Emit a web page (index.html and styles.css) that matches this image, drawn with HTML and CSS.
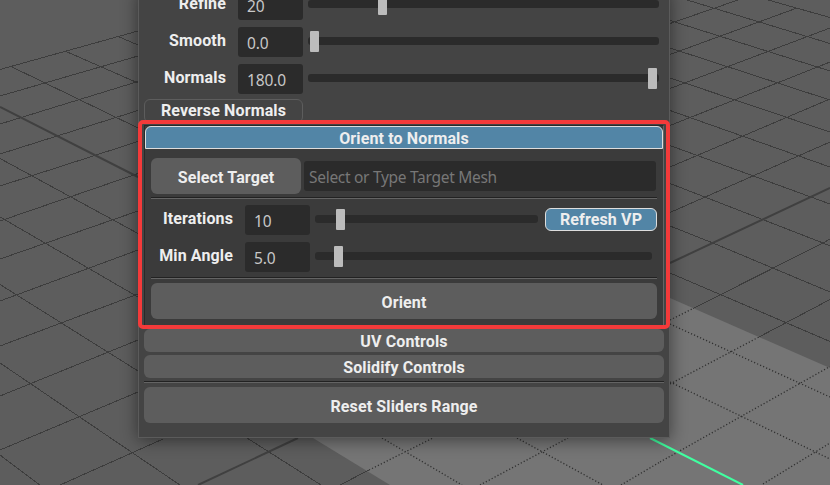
FILE: index.html
```
<!DOCTYPE html>
<html lang="en">
<head>
<meta charset="utf-8">
<title>Mesh Controls</title>
<link rel="stylesheet" href="styles.css">
</head>
<body>
<svg class="viewport" viewBox="0 0 830 485" aria-hidden="true">
  <path class="plane" d="M138 331L390 485H830V368L670 298L400 180Z"/>
  <g class="grid">
    <path d="M0 69.5L138 31M0 96L138 56M0 124L138 81.5M0 154L138 110.5M0 186L138 141.5M0 221L138 173.5M0 259L138 211M0 301L138 250M0 346L138 294M0 396L138 340M0 450L138 392M60 485L163 439"/>
    <path d="M117 36L138 45M65 51L138 83M10 66L138 128M0 158.5L138 233.5M0 217L45 243L138 297M0 284.5L138 371M0 363L180 485M0 455L40 485M247 438L321 485M340 485L369 470"/>
    <path d="M687 0L830 43.5M768 0L830 17.5M670 20.5L830 71M670 48L830 100M670 78L830 132M670 110.5L830 167M670 145.5L830 204M670 183.5L823 243L830 246M670 226L713 243L830 292M670 273L830 341.5"/>
    <path d="M670 23.5L738 0M670 54.5L797 8M670 88.5L830 28M670 125.5L830 62M670 167L830 99M670 212.5L830 142M693 308.500L823 243L830 239M758 337.500L830 299.500"/>
  </g>
  <path class="dots" d="M670 320L693 308.500M670 384L758 337.500M660 462L830 366.500M621 485L660 462M763 484L830 443M670 324L830 397M670 382L830 459M369 470L433 438M382 438L462 485M480 485L568 438M517 438L603 485"/>
  <path class="axis" d="M0 107L138 177M198 485L298 438M670 263L830 188"/>
  <path class="active-axis" d="M650 438L743 485"/>
</svg>
<main class="panel">
  <div class="row"><label>Refine</label><span class="value">20</span><div class="slider at-refine"><i></i></div></div>
  <div class="row"><label>Smooth</label><span class="value">0.0</span><div class="slider at-smooth"><i></i></div></div>
  <div class="row"><label>Normals</label><span class="value">180.0</span><div class="slider at-normals"><i></i></div></div>
  <button class="reverse">Reverse Normals</button>
  <section class="orient">
    <h2>Orient to Normals</h2>
    <div class="body">
      <div class="target"><button>Select Target</button><span class="placeholder">Select or Type Target Mesh</span></div>
      <hr>
      <div class="row"><label>Iterations</label><span class="value">10</span><div class="slider at-iterations"><i></i></div><button class="refresh">Refresh VP</button></div>
      <div class="row angle"><label>Min Angle</label><span class="value">5.0</span><div class="slider at-angle"><i></i></div></div>
      <hr>
      <button class="apply">Orient</button>
    </div>
    <div class="highlight"></div>
  </section>
  <button class="fold uv">UV Controls</button>
  <button class="fold">Solidify Controls</button>
  <hr>
  <button class="reset">Reset Sliders Range</button>
</main>
</body>
</html>
```
FILE: styles.css
```
* { box-sizing: border-box; }
body {
  margin: 0; width: 830px; height: 485px; overflow: hidden;
  background: #5d5d5d; color: #eee;
  font: 700 16px/20px Roboto, sans-serif; letter-spacing: .13px;
}
.viewport { position: absolute; inset: 0; width: 830px; height: 485px; fill: none; }
.plane { fill: #757575; }
.grid { stroke: #3d3d3d; stroke-width: 1; shape-rendering: crispEdges; }
.dots { stroke: #303030; stroke-width: 1.3; stroke-dasharray: 1.2 2.1; }
.axis { stroke: #404040; stroke-width: 2; }
.active-axis { stroke: #40ffa0; stroke-width: 2; }
.panel {
  position: relative; display: flex; flex-direction: column;
  width: 532px; height: 448px; margin: -10px 0 0 138px; padding: 0 5px;
  background: #444; border: 1px solid #5b5b5b; border-top: 0;
  box-shadow: 0 2px 16px rgba(0, 0, 0, .48);
}
button {
  display: block; margin: 0; padding: 0; border: 0; border-radius: 6px;
  background: #5d5d5d; color: inherit; font: inherit; letter-spacing: inherit; white-space: nowrap;
}
.row { display: flex; flex: none; height: 30px; margin-bottom: 7px; }
.row label { width: 82px; margin-right: 12px; padding-top: 4px; text-align: right; }
.value {
  width: 65px; margin-right: 5px; padding: 1px 0 0 9px; border-radius: 3px;
  background: #2b2b2b; color: #c8c8c8; font: 400 15.500px/30px "Noto Sans", sans-serif;
  letter-spacing: -.1px;
}
.slider {
  display: flex; align-items: center; width: 351px; height: 8px; margin-top: 10px;
  border-radius: 3px; background: #2b2b2b;
}
.slider i { width: 9px; height: 21px; border-radius: 1px; background: #bcbcbc; }
.at-refine i { margin-left: 70px; }
.at-smooth i { margin-left: 2px; }
.at-normals i { margin-left: 340px; }
.reverse {
  flex: none; width: 159px; height: 24px; margin-top: -2px;
  border: 1px solid #5d5d5d; background: #444;
}
.orient {
  position: relative; flex: none; width: 520px; height: 204px; margin-top: 2px;
  border: 1px solid #292929; border-right-color: #656565; background: #3b3b3b;
}
.orient h2 {
  width: 518px; height: 23px; margin: 0; border: 1px solid #ddd;
  border-radius: 6px 6px 0 0; background: #5285a6;
  font: inherit; line-height: 24px; text-align: center;
}
.body { padding: 9px 6px 0; }
.target { display: flex; align-items: center; height: 36px; }
.target button { width: 150px; height: 36px; margin-right: 3px; padding-top: 4px; }
.placeholder {
  width: 352px; height: 30px; padding: 1px 0 0 5px; border-radius: 3px; background: #2b2b2b;
  color: #777; font: 400 15.500px/30px "Noto Sans", sans-serif; letter-spacing: -.29px;
}
hr { flex: none; width: 100%; height: 2px; margin: 3px 0 6px; border: 0; border-top: 1px solid #222; background: #646464; }
.at-iterations { width: 223px; margin-right: 7px; }
.at-iterations i { margin-left: 21px; }
.at-angle { width: 337px; }
.at-angle i { margin-left: 19px; }
.refresh { width: 112px; height: 23px; margin-top: 3px; border: 1px solid #ddd; background: #5285a6; }
.body .angle { margin-bottom: 5px; }
.body .angle + hr { margin: 5px 0 4px; }
.apply { width: 506px; height: 36px; padding-top: 4px; }
.highlight {
  position: absolute; top: -6px; left: -7px; width: 532px; height: 209px;
  border: 4px solid #f33a3a; border-radius: 5px;
}
.fold { flex: none; width: 520px; height: 23px; margin-bottom: 3px; padding-top: 3px; }
.uv { margin-top: 0; }
.fold + hr { margin: 0 0 4px; width: 520px; }
.reset { flex: none; width: 520px; height: 36px; padding-top: 4px; }
```
